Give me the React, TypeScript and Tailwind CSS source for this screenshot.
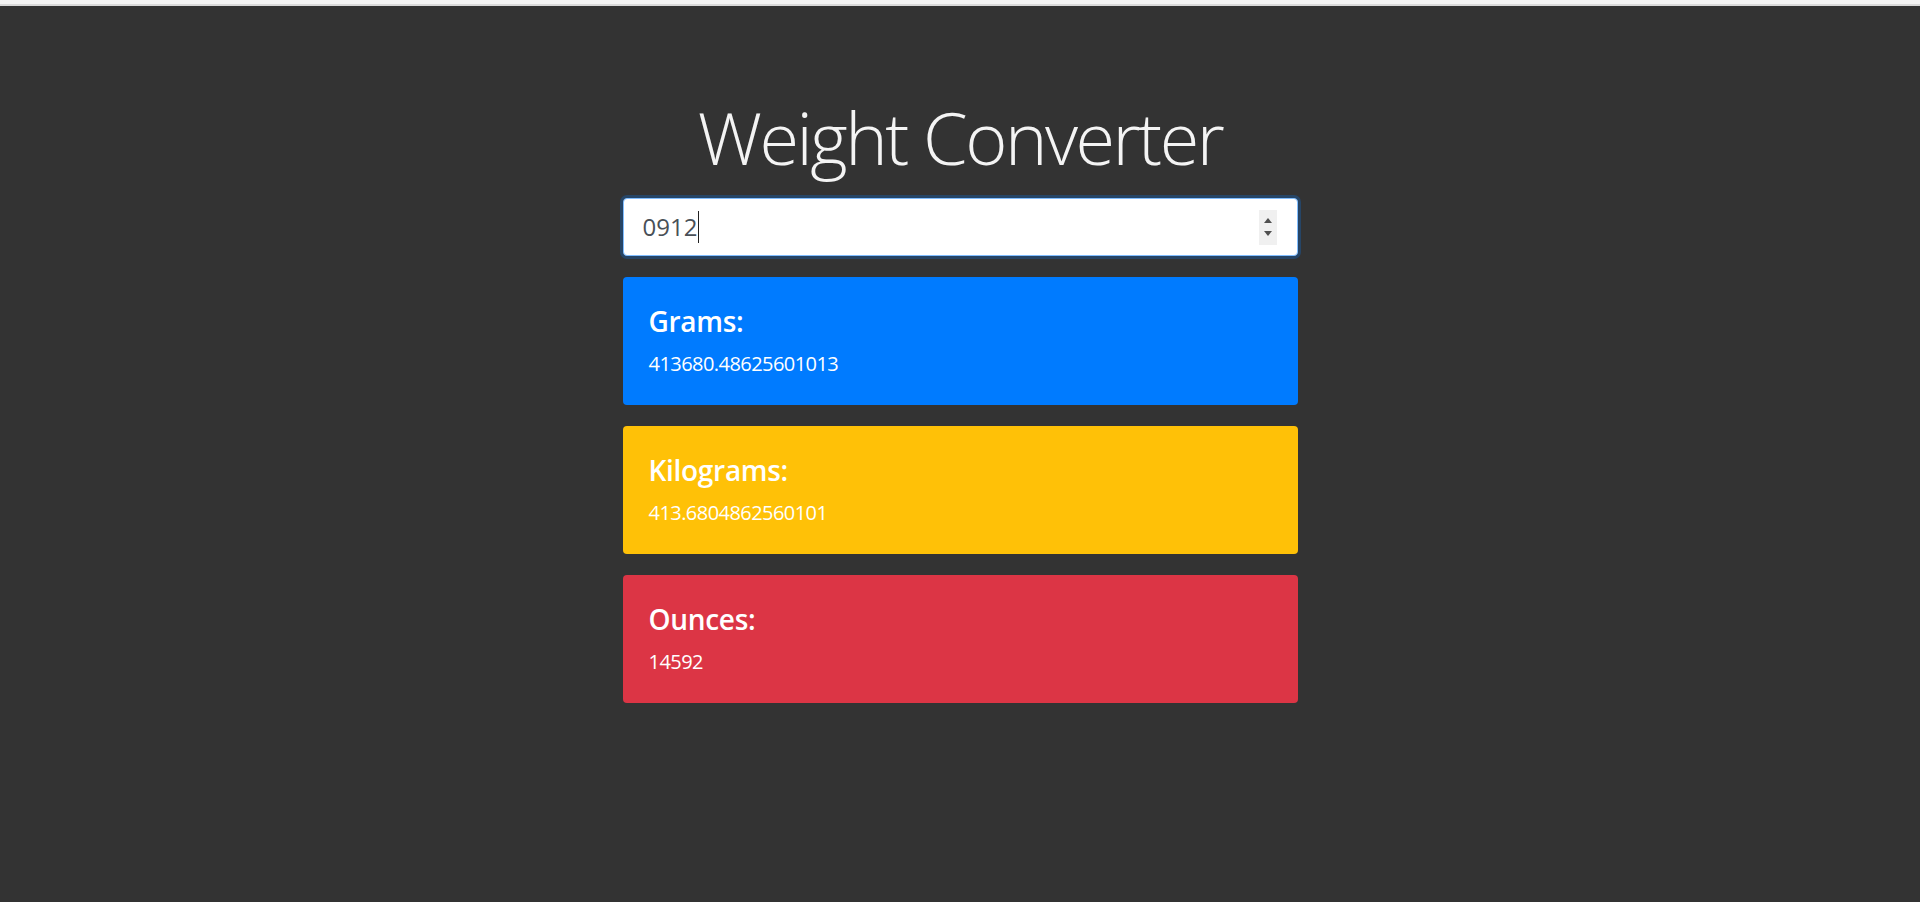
import React from "react";

const font = { fontFamily: '"Open Sans", "Noto Sans", "Liberation Sans", sans-serif' };

function Card({ color, title, value }: { color: string; title: string; value: string }) {
  return (
    <div className={`h-[128px] w-full rounded-[4px] pl-[26px] pt-[27px] flex flex-col ${color}`}>
      <div className="text-[28px] leading-[34px] font-semibold text-white tracking-[-0.3px]">{title}</div>
      <div className="mt-[12px] text-[20px] leading-[28px] text-white tracking-[-0.55px]">{value}</div>
    </div>
  );
}

export default function App() {
  return (
    <div className="min-h-[902px] w-full bg-[#333333]" style={font}>
      <div className="h-[4px] bg-[#f4f4f4]" />
      <div className="h-[2px] bg-[#dadada]" />
      <div className="mx-auto w-[675px] flex flex-col">
        <h1 className="mt-[88px] text-center text-[72px] leading-[86px] font-light text-[#f4f4f4] tracking-[-2.5px]">
          Weight Converter
        </h1>
        <div className="mt-[18px] h-[58px] w-full rounded-[4px] border border-[#80bdff] bg-white shadow-[0_0_0_3px_rgba(0,123,255,0.25)] flex items-center pl-[19px] pr-[20px]">
          <span className="text-[24px] leading-[30px] text-[#495057]">0912</span>
          <span className="ml-[1px] h-[32px] w-[1px] bg-[#222]" />
          <div className="ml-auto flex h-[35px] w-[18px] flex-col items-center justify-center gap-[8px] bg-[#f0f0f0]">
            <svg width="8" height="5" viewBox="0 0 8 5"><path d="M0 5 L4 0 L8 5 Z" fill="#505050" /></svg>
            <svg width="8" height="5" viewBox="0 0 8 5"><path d="M0 0 L4 5 L8 0 Z" fill="#505050" /></svg>
          </div>
        </div>
        <div className="mt-[21px] flex flex-col gap-[21px]">
          <Card color="bg-[#007bff]" title="Grams:" value="413680.48625601013" />
          <Card color="bg-[#ffc107]" title="Kilograms:" value="413.6804862560101" />
          <Card color="bg-[#dc3545]" title="Ounces:" value="14592" />
        </div>
      </div>
    </div>
  );
}
